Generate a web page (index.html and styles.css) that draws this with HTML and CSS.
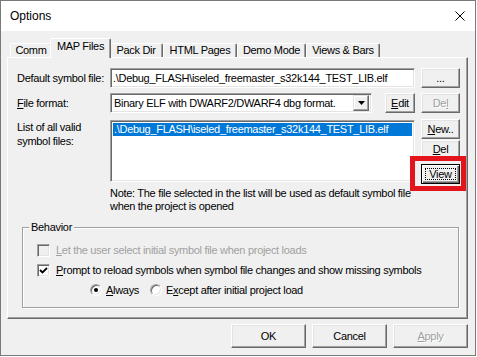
FILE: index.html
```html
<!DOCTYPE html>
<html>
<head>
<meta charset="utf-8">
<link rel="stylesheet" href="styles.css">
</head>
<body>
<div class="window">
  <div class="titlebar">
    <span class="title">Options</span>
    <svg class="close" viewBox="0 0 10 10" width="10" height="10"><path d="M0.5 0.5 L9.5 9.5 M9.5 0.5 L0.5 9.5" stroke="#000" stroke-width="1" fill="none"/></svg>
  </div>
  <div class="client">
    <div class="tabs">
      <div class="tab t-comm">Comm</div>
      <div class="tab t-map active">MAP Files</div>
      <div class="tab t-pack">Pack Dir</div>
      <div class="tab t-html">HTML Pages</div>
      <div class="tab t-demo">Demo Mode</div>
      <div class="tab t-views">Views &amp; Bars</div>
    </div>
    <div class="panel">
      <div class="form">
        <div class="lbl">Default symbol file:</div>
        <div class="field">.\Debug_FLASH\iseled_freemaster_s32k144_TEST_LIB.elf</div>
        <div class="btn">...</div>

        <div class="lbl"><u>F</u>ile format:</div>
        <div class="fmt">
          <div class="select">
            <span class="select-text">Binary ELF with DWARF2/DWARF4 dbg format.</span>
            <span class="drop"><svg viewBox="0 0 7 4" width="7" height="4"><path d="M0 0 H7 L3.5 4 Z" fill="#000"/></svg></span>
          </div>
          <div class="btn edit"><u>E</u>dit</div>
        </div>
        <div class="btn disabled">De<u>l</u></div>

        <div class="lbl multi">List of all valid<br>symbol files:</div>
        <div class="list">
          <div class="item sel">.\Debug_FLASH\iseled_freemaster_s32k144_TEST_LIB.elf</div>
        </div>
        <div class="btncol">
          <div class="btn"><u>N</u>ew..</div>
          <div class="btn del2"><u>D</u>el</div>
          <div class="mark"><div class="btn default">View</div></div>
        </div>

        <div class="note">Note: The file selected in the list will be used as default symbol file<br>when the project is opened</div>
      </div>

      <fieldset class="group">
        <legend>Behavior</legend>
        <div class="opts">
          <div class="opt disabled-opt"><span class="check off"></span><span><u>L</u>et the user select initial symbol file when project loads</span></div>
          <div class="opt"><span class="check"><svg viewBox="0 0 9 9" width="9" height="9"><path d="M1 4 L3.5 6.5 L8 2" stroke="#000" stroke-width="1.8" fill="none"/></svg></span><span><u>P</u>rompt to reload symbols when symbol file changes and show missing symbols</span></div>
          <div class="opt radios">
            <span class="ritem"><span class="radio on"></span><span><u>A</u>lways</span></span>
            <span class="ritem"><span class="radio"></span><span>E<u>x</u>cept after initial project load</span></span>
          </div>
        </div>
      </fieldset>
    </div>
    <div class="footer">
      <div class="btn big">OK</div>
      <div class="btn big">Cancel</div>
      <div class="btn big disabled"><u>A</u>pply</div>
    </div>
  </div>
</div>
</body>
</html>
```

FILE: styles.css
```css
* { box-sizing: border-box; }
html, body { margin: 0; padding: 0; background: #fff; }
body {
  font-family: "Liberation Sans", Arial, sans-serif;
  font-size: 11px;
  letter-spacing: -0.3px;
  color: #000;
}
u { text-decoration: underline; text-underline-offset: 1px; }

.window {
  width: 476px;
  height: 356px;
  border: 1px solid #7a7a7a;
  background: #f0f0f0;
  display: flex;
  flex-direction: column;
}
.titlebar {
  flex: none;
  height: 30px;
  background: #fff;
  display: flex;
  align-items: center;
  justify-content: space-between;
  padding: 0 10px 0 9px;
}
.title { font-size: 12px; letter-spacing: 0; }
.close { display: block; }

.client { flex: 1; padding-left: 6px; }

.tabs {
  display: flex;
  align-items: flex-end;
  height: 19px;
  margin-top: 7px;
  padding-left: 3px;
  position: relative;
  z-index: 1;
}
.tab {
  height: 14px;
  padding: 0;
  border: 1px solid;
  border-color: #fff #696969 transparent #fff;
  border-bottom: none;
  border-radius: 2px 2px 0 0;
  box-shadow: inset -1px 0 #a0a0a0;
  background: #f0f0f0;
  line-height: 13px;
  text-align: center;
  white-space: nowrap;
}
.t-comm { width: 42px; }
.t-map { width: 57px; }
.t-pack { width: 54px; }
.t-html { width: 74px; }
.t-demo { width: 69px; }
.t-views { width: 74px; }
.tab.active {
  width: 61px;
  height: 20px;
  margin: 0 -2px -1px;
  line-height: 15px;
  position: relative;
  z-index: 2;
}

.panel {
  width: 461px;
  height: 262px;
  border: 1px solid;
  border-color: #fff #696969 #696969 #fff;
  box-shadow: inset -1px -1px #a0a0a0;
  padding: 10px 0 0 9px;
}

.form {
  display: grid;
  grid-template-columns: 87px 305px 39px;
  grid-template-rows: 20px 20px 66px auto;
  column-gap: 6px;
  row-gap: 5px;
}
.lbl { align-self: center; white-space: nowrap; }
.lbl.multi { align-self: start; margin-top: 2px; line-height: 14px; }

.field, .select, .list {
  border: 1px solid;
  border-color: #a0a0a0 #fff #fff #a0a0a0;
  box-shadow: inset 1px 1px #696969, inset -1px -1px #e3e3e3;
  background: #fff;
}
.field {
  display: flex;
  align-items: center;
  padding-left: 2px;
  white-space: nowrap;
  overflow: hidden;
}

.btn {
  display: flex;
  align-items: center;
  justify-content: center;
  height: 20px;
  border: 1px solid;
  border-color: #fff #696969 #696969 #fff;
  box-shadow: inset -1px -1px #a0a0a0, inset 1px 1px #e3e3e3;
  background: #f0f0f0;
  white-space: nowrap;
}
.btn.disabled { color: #a0a0a0; text-shadow: 1px 1px #fff; }

.fmt { display: flex; align-items: stretch; }
.select {
  width: 262px;
  display: flex;
  align-items: center;
  padding: 2px 2px 2px 3px;
  margin-right: auto;
}
.select-text { flex: 1; white-space: nowrap; overflow: hidden; }
.drop {
  width: 16px;
  height: 16px;
  display: flex;
  align-items: center;
  justify-content: center;
  border: 1px solid;
  border-color: #e3e3e3 #696969 #696969 #e3e3e3;
  box-shadow: inset -1px -1px #a0a0a0, inset 1px 1px #fff;
  background: #f0f0f0;
}
.drop svg { display: block; }
.btn.edit { width: 30px; }

.list { height: 62px; margin-top: 2px; padding: 2px; }
.item { height: 13px; line-height: 13px; padding-left: 1px; white-space: nowrap; overflow: hidden; }
.item.sel { background: #0078d7; color: #fff; }

.btncol { display: flex; flex-direction: column; margin-top: 1px; }
.btncol .del2 { margin-top: 1px; }
.mark { position: relative; margin-top: 5px; }
.mark::before {
  content: "";
  position: absolute;
  left: -11px; right: -6px; top: -8px; bottom: -7px;
  border: 5px solid #e3141c;
}
.btn.default {
  position: relative;
  border-color: #000;
  box-shadow: inset 1px 1px #fff, inset -1px -1px #696969, inset -2px -2px #a0a0a0;
}
.btn.default::after {
  content: "";
  position: absolute;
  inset: 3px;
  border: 1px dotted #000;
}

.note { grid-column: 2 / 4; line-height: 13px; margin-top: -2px; white-space: nowrap; }

.group {
  margin: 8px 0 0 5px;
  width: 437px;
  height: 87px;
  border: 1px solid #a0a0a0;
  box-shadow: inset 1px 1px #fff, 1px 1px #fff;
  padding: 0 0 0 6px;
  min-width: 0;
}
.group legend { padding: 0 2px; line-height: 13px; background: #f0f0f0; }
.opts { padding: 6px 0 0 8px; }
.opt { height: 20px; display: flex; align-items: center; white-space: nowrap; }
.disabled-opt { color: #a0a0a0; }
.check {
  width: 13px;
  height: 13px;
  margin-right: 6px;
  border: 1px solid;
  border-color: #a0a0a0 #fff #fff #a0a0a0;
  box-shadow: inset 1px 1px #696969, inset -1px -1px #e3e3e3;
  background: #fff;
  display: flex;
  align-items: center;
  justify-content: center;
}
.check.off { background: #f0f0f0; }
.check svg { display: block; }
.radios { padding-left: 53px; gap: 11px; }
.ritem { display: flex; align-items: center; }
.radio {
  width: 12px;
  height: 12px;
  margin-right: 4px;
  border-radius: 50%;
  border: 1px solid;
  border-color: #a0a0a0 #fff #fff #a0a0a0;
  box-shadow: inset 1px 1px #696969, inset -1px -1px #e3e3e3;
  background: #fff;
  display: flex;
  align-items: center;
  justify-content: center;
}
.radio.on::after {
  content: "";
  width: 4px;
  height: 4px;
  border-radius: 50%;
  background: #000;
}

.footer {
  width: 461px;
  margin-top: 5px;
  display: flex;
  justify-content: flex-end;
  gap: 6px;
}
.btn.big { width: 75px; height: 24px; }
```
